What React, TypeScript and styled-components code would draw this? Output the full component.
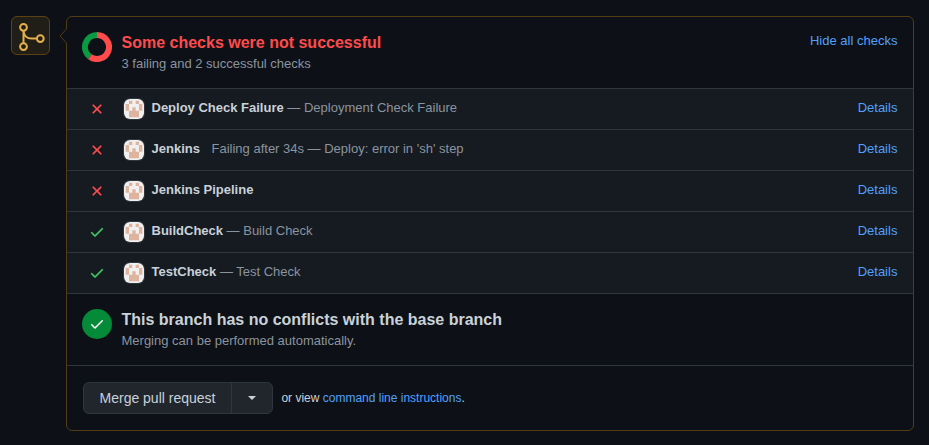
import React from "react";
import styled, { createGlobalStyle } from "styled-components";

const GlobalStyle = createGlobalStyle`
  html, body { margin: 0; background: #0d1117; }
  body {
    height: 445px;
    overflow: hidden;
    font-family: "Liberation Sans", Arial, sans-serif;
    font-size: 13px;
    color: #c9d1d9;
  }
  * { box-sizing: border-box; }
`;

const Timeline = styled.main`
  display: flex;
  align-items: flex-start;
  gap: 16px;
  padding: 16px 15px 0 11px;
`;

const MergeBadge = styled.div`
  width: 39px;
  height: 39px;
  flex: none;
  border: 1px solid #5c4114;
  border-radius: 6px;
  background: #211e17;
  svg { display: block; }
`;

const Card = styled.section`
  position: relative;
  flex: 1;
  height: 415px;
  border: 1px solid #533b13;
  border-radius: 6px;
`;

const Caret = styled.svg`
  position: absolute;
  left: -8px;
  top: 11px;
`;

const Section = styled.div`
  display: flex;
  height: 72px;
  padding: 15px 15.6px 0 15px;
  border-bottom: 1px solid #30363d;
`;

const SectionIcon = styled.svg`
  flex: none;
  margin-right: 10px;
`;

const SectionText = styled.div`
  flex: 1;
`;

const Title = styled.h3<{ $danger?: boolean }>`
  margin: 0 0 0 -0.5px;
  font-size: 16px;
  line-height: 22px;
  font-weight: 700;
  color: ${(p) => (p.$danger ? "#ff4b4b" : "#c9d1d9")};
`;

const Muted = styled.p`
  margin: 0 0 0 -0.5px;
  font-size: 13px;
  line-height: 20px;
  color: #8b949e;
`;

const Link = styled.a`
  color: #52a0fb;
  text-decoration: none;
  cursor: pointer;
`;

const HideLink = styled(Link)`
  line-height: 18px;
`;

const Row = styled.div`
  display: flex;
  align-items: center;
  height: 41px;
  padding: 0 15.6px 0 22px;
  background: #161b22;
  border-bottom: 1px solid #30363d;
  line-height: 20px;
`;

const StatusIcon = styled.svg`
  flex: none;
  margin-right: 19px;
`;

const Avatar = styled.svg`
  flex: none;
  margin-right: 7.5px;
  border-radius: 6px;
  box-shadow: 0 0 0 1px #30363d;
`;

const RowText = styled.div`
  flex: 1;
  padding-bottom: 3px;
  color: #8b949e;
  white-space: pre;
`;

const CheckName = styled.strong`
  color: #c9d1d9;
`;

const Detail = styled.span<{ $spaced?: boolean }>`
  margin-left: ${(p) => (p.$spaced ? "11.6px" : "3.6px")};
`;

const RowLink = styled(Link)`
  padding-bottom: 3px;
`;

const Actions = styled.div`
  display: flex;
  align-items: center;
  gap: 8.4px;
  padding: 16px;
`;

const ButtonGroup = styled.div`
  display: flex;
  width: 190px;
  height: 32px;
  border: 1px solid #30363d;
  border-radius: 6px;
  background: #21262d;
  overflow: hidden;
`;

const Button = styled.button`
  padding: 0;
  border: 0;
  background: none;
  color: #c9d1d9;
  font: 14px/30px "Liberation Sans", Arial, sans-serif;
`;

const MergeButton = styled(Button)`
  flex: 1;
  border-right: 1px solid #30363d;
`;

const MenuButton = styled(Button)`
  display: flex;
  align-items: center;
  justify-content: center;
  width: 40px;
`;

const Hint = styled.span`
  font-size: 12px;
  line-height: 18px;
`;

function Identicon() {
  return (
    <Avatar width="20" height="20" viewBox="0 0 420 420">
      <rect width="420" height="420" fill="#f0f0f0" />
      <path
        d="M105 35h70v70h-70zM245 35h70v70h-70zM35 105h70v140h-70zM315 105h70v140h-70zM175 175h70v70h70v140h-210v-140h70z"
        fill="#dfb49f"
      />
    </Avatar>
  );
}

const CHECK_PATH =
  "M13.78 4.22a.75.75 0 0 1 0 1.06l-7.25 7.25a.75.75 0 0 1-1.06 0L2.22 9.28a.75.75 0 0 1 1.06-1.06L6 10.94l6.72-6.72a.75.75 0 0 1 1.06 0z";
const X_PATH =
  "M3.72 3.72a.75.75 0 0 1 1.06 0L8 6.94l3.22-3.22a.75.75 0 1 1 1.06 1.06L9.06 8l3.22 3.22a.75.75 0 1 1-1.06 1.06L8 9.06l-3.22 3.22a.75.75 0 0 1-1.06-1.06L6.94 8 3.72 4.78a.75.75 0 0 1 0-1.06z";

type Check = { name: string; detail: string; ok: boolean; spaced?: boolean };

const CHECKS: Check[] = [
  { name: "Deploy Check Failure", detail: "— Deployment Check Failure", ok: false },
  { name: "Jenkins", detail: "Failing after 34s — Deploy: error in 'sh' step", ok: false, spaced: true },
  { name: "Jenkins Pipeline", detail: "", ok: false },
  { name: "BuildCheck", detail: "— Build Check", ok: true },
  { name: "TestCheck", detail: "— Test Check", ok: true },
];

function CheckRow({ name, detail, ok, spaced }: Check) {
  const color = ok ? "#3fc960" : "#ff4b4b";
  return (
    <Row>
      <StatusIcon width="16" height="16" viewBox="0 0 16 16" fill={color} stroke={color} strokeWidth="0.25">
        <path d={ok ? CHECK_PATH : X_PATH} />
      </StatusIcon>
      <Identicon />
      <RowText>
        <CheckName>{name}</CheckName>
        {detail && <Detail $spaced={spaced}>{detail}</Detail>}
      </RowText>
      <RowLink>Details</RowLink>
    </Row>
  );
}

export default function App() {
  return (
    <>
      <GlobalStyle />
      <Timeline>
        <MergeBadge>
          <svg width="37" height="37" viewBox="0 0 37 37" fill="none" stroke="#e3b04b" strokeWidth="2">
            <circle cx="11.5" cy="10.3" r="3.4" />
            <circle cx="11.5" cy="29.6" r="3.4" />
            <circle cx="28.3" cy="21.6" r="3.4" />
            <path d="M11.5 13.8v12.4M11.5 13.8c.4 4.6 3.4 7.8 8 7.8h5.4" />
          </svg>
        </MergeBadge>
        <Card>
          <Caret width="8" height="16" viewBox="0 0 8 16">
            <path d="M8 0.5L1 8l7 7.5z" fill="#0d1117" />
            <path d="M7.5 1L1 8l6.5 7" fill="none" stroke="#533b13" />
          </Caret>
          <Section>
            <SectionIcon width="30" height="30" viewBox="0 0 30 30" fill="none" strokeWidth="6">
              <path d="M15 3a12 12 0 0 0-7.053 21.708" stroke="#0a9a43" />
              <path d="M15 3a12 12 0 1 1-7.053 21.708" stroke="#ff4b4b" />
            </SectionIcon>
            <SectionText>
              <Title $danger>Some checks were not successful</Title>
              <Muted>3 failing and 2 successful checks</Muted>
            </SectionText>
            <HideLink>Hide all checks</HideLink>
          </Section>
          {CHECKS.map((c) => (
            <CheckRow key={c.name} {...c} />
          ))}
          <Section>
            <SectionIcon width="30" height="30" viewBox="0 0 30 30">
              <circle cx="15" cy="15" r="15" fill="#048a38" />
              <path d={CHECK_PATH} transform="translate(7 7)" fill="#fff" />
            </SectionIcon>
            <SectionText>
              <Title>This branch has no conflicts with the base branch</Title>
              <Muted>Merging can be performed automatically.</Muted>
            </SectionText>
          </Section>
          <Actions>
            <ButtonGroup>
              <MergeButton>Merge pull request</MergeButton>
              <MenuButton aria-label="Select merge method">
                <svg width="8" height="4" viewBox="0 0 8 4">
                  <path d="M0 0h8L4 4z" fill="#c9d1d9" />
                </svg>
              </MenuButton>
            </ButtonGroup>
            <Hint>
              or view <Link>command line instructions</Link>.
            </Hint>
          </Actions>
        </Card>
      </Timeline>
    </>
  );
}
